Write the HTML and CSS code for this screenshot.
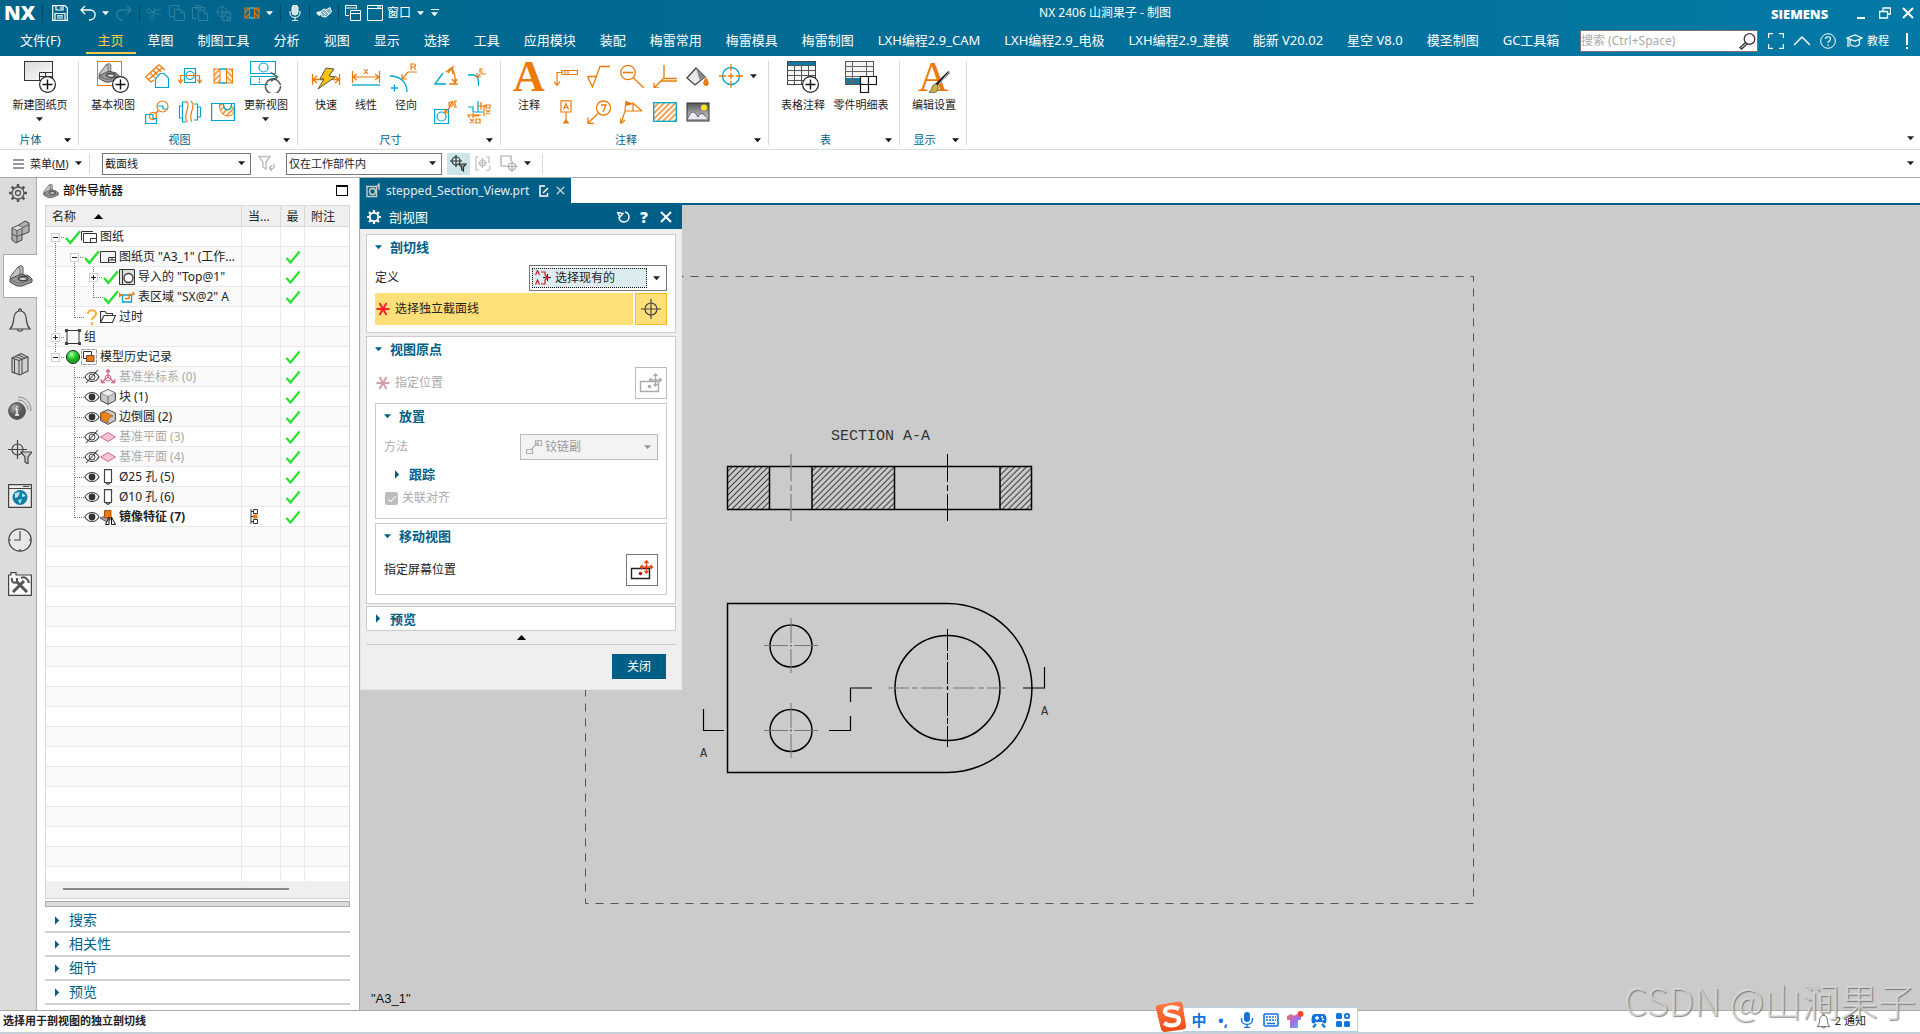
FILE: index.html
```html
<!DOCTYPE html>
<html lang="zh-CN">
<head>
<meta charset="utf-8">
<title>NX 2406 山涧果子 - 制图</title>
<link rel="stylesheet" href="styles.css">
</head>
<body>
<svg class="defs" aria-hidden="true">
  <defs>
    <pattern id="hatch" width="4.25" height="4.25" patternUnits="userSpaceOnUse" patternTransform="rotate(45)"><path d="M2 0V5" stroke="#222" stroke-width=".9"/></pattern>
    <pattern id="ohatch" width="4" height="4" patternUnits="userSpaceOnUse" patternTransform="rotate(-45)"><path d="M0 2H4" stroke="#ec7a08" stroke-width="1.4"/></pattern>
    <pattern id="ohatch2" width="4" height="4" patternUnits="userSpaceOnUse" patternTransform="rotate(45)"><path d="M0 2H4" stroke="#ec7a08" stroke-width="1.4"/></pattern>
    <linearGradient id="paper" x2="1" y2="1"><stop stop-color="#d8d8d8"/><stop offset="1" stop-color="#fff"/></linearGradient>
    <linearGradient id="sky" x2="0" y2="1"><stop stop-color="#555"/><stop offset="1" stop-color="#ddd"/></linearGradient>
    <linearGradient id="shirt" x2="1" y2="1"><stop stop-color="#ff6a55"/><stop offset=".5" stop-color="#a66be8"/><stop offset="1" stop-color="#46c8ff"/></linearGradient>
    <linearGradient id="sg" x2="0" y2="1"><stop stop-color="#ff7a45"/><stop offset="1" stop-color="#ee4a10"/></linearGradient>
    <radialGradient id="ball" cx=".4" cy=".3"><stop stop-color="#d5ffd0"/><stop offset=".5" stop-color="#35dc3a"/><stop offset="1" stop-color="#1aa51f"/></radialGradient>
    <radialGradient id="gball" cx=".35" cy=".3"><stop stop-color="#aaa"/><stop offset="1" stop-color="#555"/></radialGradient>
  </defs>
  <symbol id="caret" viewBox="0 0 8 5"><path d="M0 0H8L4 4.5Z" fill="currentColor"/></symbol>
  <symbol id="tri" viewBox="0 0 6 10"><path d="M0 0L5 5L0 10Z" fill="currentColor"/></symbol>
  <symbol id="plus" viewBox="0 0 17 17"><circle cx="8.500" cy="8.500" r="7.900" fill="#fff" stroke="#222" stroke-width="1.2"/><path d="M8.500 3.500V13.500M3.500 8.500H13.500" stroke="#111" stroke-width="1.400"/></symbol>

  <symbol id="save" viewBox="0 0 16 16"><path d="M.7.7H13L15.300 3V15.300H.7ZM4 .7V5H11V.7M3 15V8.500H13V15M5 10.800H11M5 13H11M9 2V4" fill="none" stroke="#fff" stroke-width="1.200"/></symbol>
  <symbol id="undo" viewBox="0 0 16 16"><path d="M5 1L1 5L5 9M1 5H10C17 5 17 15 9 15" fill="none" stroke="currentColor" stroke-width="1.300"/></symbol>
  <symbol id="redo" viewBox="0 0 16 16"><path d="M11 1L15 5L11 9M15 5H6C-1 5-1 15 7 15" fill="none" stroke="currentColor" stroke-width="1.300"/></symbol>
  <symbol id="cut" viewBox="0 0 16 16"><g fill="none" stroke="currentColor"><circle cx="3" cy="6" r="2.200"/><circle cx="6" cy="13" r="2.200"/><path d="M5 7L15 10M7 11L9 2M5 7L12 5L15 4"/></g></symbol>
  <symbol id="copy" viewBox="0 0 16 16"><path d="M10 4V.5H.5V11.500H5M5.500 4.500H12L15.500 8V15.500H5.500ZM12 4.500V8H15.500" fill="none" stroke="currentColor"/></symbol>
  <symbol id="paste" viewBox="0 0 16 16"><path d="M5 13.500H.5V2.500H12.500V5M4 2V.5H9V4H4V2M6.500 5.500H12L15.500 9V15.500H6.500ZM12 5.500V9H15.500" fill="none" stroke="currentColor"/></symbol>
  <symbol id="mv" viewBox="0 0 16 16"><g fill="none" stroke="currentColor"><circle cx="7" cy="7" r="5"/><path d="M7 0V14M0 7H14M7.500 7.500H15.500V15.500H7.500ZM9 9L14 14M14 11V14H11"/></g></symbol>
  <symbol id="sect" viewBox="0 0 16 16"><rect x="1" y="3" width="4.500" height="10" fill="url(#ohatch)" stroke="#ec7a08"/><rect x="10.500" y="3" width="4.500" height="10" fill="url(#ohatch2)" stroke="#ec7a08"/><path d="M6 3H10M6 13H10" stroke="#19c4ec" stroke-width="1.300"/></symbol>
  <symbol id="mic" viewBox="0 0 16 16"><rect x="5" y="0" width="6" height="10" rx="3" fill="#cfe3ea" stroke="#fff"/><path d="M3 6V8C3 14 13 14 13 8V6M8 12.500V15M5 15.500H11" fill="none" stroke="#fff"/></symbol>
  <symbol id="tap" viewBox="0 0 16 16"><path d="M0 8L3 6L6 9L3 11Z" fill="#fff"/><path d="M4 7L8 4L10 5L14 2.500L15.500 7L10 12L6 11.500Z" fill="#7db2c6" stroke="#fff"/><path d="M9 5L13 9M7 7L10 10" stroke="#fff"/></symbol>
  <symbol id="wins" viewBox="0 0 16 16"><path d="M.5.500H11.500V4M4 10.500H.5V.5M.5 3H11.500M5.500 5.500H15.500V15.500H5.500ZM5.500 8.500H15.500" fill="none" stroke="#fff"/></symbol>
  <symbol id="win" viewBox="0 0 16 16"><path d="M.5.500H15.500V15.500H.5ZM.5 3.500H15.500M10 2H14" fill="none" stroke="#fff"/></symbol>
  <symbol id="search" viewBox="0 0 17 17"><g fill="none" stroke="#333" stroke-width="1.300"><circle cx="10.500" cy="6" r="5.300"/><path d="M6.500 9.500L1 14.500L2.500 16L8 11"/></g></symbol>
  <symbol id="full" viewBox="0 0 16 16"><path d="M5 .6H.6V5M11 .6H15.400V5M5 15.400H.6V11M11 15.400H15.400V11" fill="none" stroke="#fff" stroke-width="1.200"/></symbol>
  <symbol id="up" viewBox="0 0 16 16"><path d="M0 12L8 4L16 12" fill="none" stroke="#fff" stroke-width="1.500"/></symbol>
  <symbol id="help" viewBox="0 0 16 16"><circle cx="8" cy="8" r="7.300" fill="none" stroke="#fff"/><path d="M5.500 6C5.500 3 10.500 3 10.500 6C10.500 8 8 8 8 10M8 11.500V13" fill="none" stroke="#fff" stroke-width="1.200"/></symbol>
  <symbol id="hat" viewBox="0 0 17 14"><path d="M1 4L9 1L16 4L9 7ZM4 5.500V10C6 13 12 13 13.500 10V5.500M2 5V12M4 12H1" fill="none" stroke="#fff" stroke-width="1.200"/></symbol>

  <symbol id="part" viewBox="0 0 24 22"><path d="M1 12L9 2L12 .6L14 2V10L3 16Z" fill="#c4c4c4" stroke="#555"/><path d="M9 2L11 3V12" fill="none" stroke="#666"/><path d="M1 14L12 9L20 11L23 14V17L13 21L8 21L1 17Z" fill="#9a9a9a" stroke="#444"/><path d="M1 14L9 18H13L23 14" fill="none" stroke="#666"/><ellipse cx="14" cy="13.500" rx="5" ry="2.300" fill="#777" stroke="#333"/><ellipse cx="14" cy="14" rx="3" ry="1.100" fill="#ddd"/></symbol>
  <symbol id="newsheet" viewBox="0 0 32 32"><rect x=".5" y=".5" width="28" height="19" fill="url(#paper)" stroke="#333"/><path d="M15.500 19V11.500H28M15.500 15.500H28M21.500 11.500V16" fill="none" stroke="#333"/><use href="#plus" x="15" y="15" width="17" height="17"/></symbol>
  <symbol id="baseview" viewBox="0 0 32 32"><rect x=".5" y=".5" width="24" height="24" fill="#fff" stroke="#ec7a08"/><use href="#part" x="1" y="2" width="22" height="20"/><use href="#plus" x="15" y="15" width="17" height="17"/></symbol>
  <symbol id="update" viewBox="0 0 32 32"><g fill="none" stroke="#00a5cf" stroke-width="1.200"><path d="M.5.500H25.500V12.500H.5ZM.5 15.500H25.500M.5 15.500V23.500H18"/><circle cx="13.500" cy="6.500" r="4.500"/><path d="M9.500 17V22" stroke-dasharray="2 1"/></g><path d="M27 19A7.500 7.500 0 1 0 30.500 25M21 11.500L27.500 16L21 20M22 18C25 18 29 19 30.500 24" fill="none" stroke="#555" stroke-width="1.500"/></symbol>
  <symbol id="fast" viewBox="0 0 32 32"><path d="M2.500 13V24M29.500 13V24M3 18.500H29M7 15L3 18.500L7 22M25 15L29 18.500L25 22" fill="none" stroke="#ec7a08" stroke-width="1.300"/><path d="M16 7L24 8L19 15L25 16L8 28L14 18H10Z" fill="#f8c20a" stroke="#555"/></symbol>
  <symbol id="linear" viewBox="0 0 32 32"><path d="M2.500 10V22M29.500 10V22M3 16H29M7 13L3 16L7 19M25 13L29 16L25 19M14 8L18 13M18 8L14 13" fill="none" stroke="#ec7a08" stroke-width="1.200"/><path d="M2 24H30" stroke="#00a5cf" stroke-width="1.300"/></symbol>
  <symbol id="radial" viewBox="0 0 32 32"><path d="M0 15C10 15 17 21 17 31M1 27H8M4.500 23.500V30.500" fill="none" stroke="#00a5cf" stroke-width="1.300"/><path d="M12 18L18 11H27M12 13V18H17M21 9V3H24C26 3 26 6 24 6H21M24 6L26 9" fill="none" stroke="#ec7a08" stroke-width="1.200"/></symbol>
  <symbol id="table" viewBox="0 0 32 32"><rect x=".5" y=".5" width="28" height="23" fill="#f7f7f7" stroke="#444"/><rect x="1" y="1" width="27" height="3" fill="#0a7ba6"/><path d="M0 4.500H28M0 9.500H28M0 14.500H28M0 19.500H28M7.500 4V23M14.500 4V23M21.500 4V23" stroke="#555"/><use href="#plus" x="15" y="15" width="17" height="17"/></symbol>
  <symbol id="plist" viewBox="0 0 32 32"><rect x=".5" y=".5" width="28" height="23" fill="#f3f3f3" stroke="#555"/><rect x="1" y="17" width="16" height="6" fill="#0a7ba6"/><path d="M0 5.500H28M0 10.500H28M0 15.500H28M7.500 1V23M21.500 1V15M1 20H16" stroke="#666"/><path d="M15.500 15.500H31.500V23.500H23.500V31.500H15.500ZM15.500 23.500H23.500V15.500" fill="#fff" stroke="#111" stroke-width="1.200"/></symbol>
  <symbol id="edit" viewBox="0 0 32 32"><path d="M31 11L17 25" stroke="#222" stroke-width="2.500"/><path d="M32 10L21 23" stroke="#ccc" stroke-width="1"/><path d="M18 23C13 23 15 29 11 31C16 33 21 31 20 25Z" fill="#d0b040" stroke="#665"/></symbol>

  <symbol id="s1" viewBox="0 0 24 24"><g fill="none" stroke-width="1.200"><path d="M.6 13L14 .7L20 6M.6 13L6 18L9 16M5 9L10 14M8 6L12.500 11M11 3L16 8M4 15L17 4" stroke="#ec7a08"/><path d="M10.500 23.500V15L15 9.500H19L23.500 14V23.500Z" stroke="#00a5cf" fill="#fff"/></g></symbol>
  <symbol id="s2" viewBox="0 0 24 24"><g fill="none" stroke-width="1.200"><path d="M6.500 4.500H17.500V18.500H6.500Z" stroke="#00a5cf"/><circle cx="12" cy="11.500" r="4" stroke="#00a5cf"/><path d="M2.500 18V11.500H21.500V18M0 15.500L2.500 19L5 15.500M19 15.500L21.500 19L24 15.500" stroke="#ec7a08"/></g></symbol>
  <symbol id="s3" viewBox="0 0 24 24"><rect x="3" y="5" width="6" height="14" fill="url(#ohatch)" stroke="#ec7a08"/><rect x="15.500" y="5" width="6" height="14" fill="url(#ohatch2)" stroke="#ec7a08"/><path d="M9 5H15.500M9 19H15.500" stroke="#00a5cf" stroke-width="1.400"/></symbol>
  <symbol id="s4" viewBox="0 0 24 24"><g fill="none" stroke-width="1.200"><circle cx="17.500" cy="6.500" r="5.500" stroke="#ec7a08"/><circle cx="8" cy="16" r="3.500" stroke="#ec7a08"/><path d="M13.500 10.500L10.500 13.500" stroke="#ec7a08"/><path d="M.6 14.500H8V18.500H11.500V23.500H.6ZM13 6H18V9H22" stroke="#00a5cf"/></g></symbol>
  <symbol id="s5" viewBox="0 0 24 24"><g fill="none" stroke-width="1.200"><path d="M8 2H4.500V22H8M4.500 6H1.500V18H4.500M16 4H19.500V20H16M19.500 7H22.500V17H19.500" stroke="#00a5cf"/><path d="M8 1C14 7 4 14 9 22M13 1C19 7 9 14 14 22" stroke="#ec7a08"/></g></symbol>
  <symbol id="s6" viewBox="0 0 24 24"><path d="M8.500 4C8 11 12 16 17 16C20 16 22 14 23 12V9L20.500 6C20 11 12.500 11 12.500 4Z" fill="url(#ohatch)" stroke="#ec7a08"/><path d="M.6 3.500H23.400V20.500H.6ZM12.500 3.500C12.500 12 20.500 12 20.500 3.500" fill="none" stroke="#00a5cf" stroke-width="1.200"/></symbol>
  <symbol id="d1" viewBox="0 0 24 24"><path d="M9 9L1 20H12" fill="none" stroke="#00a5cf" stroke-width="1.300"/><path d="M12 8L20 2M15 20H24M18 4C20 8 22 13 21 19M14 9L18 4L19 10M18 15L21 19L23 15" fill="none" stroke="#ec7a08" stroke-width="1.300"/></symbol>
  <symbol id="d2" viewBox="0 0 24 24"><path d="M1 11H7C11 12 11.500 14 11.500 22" fill="none" stroke="#00a5cf" stroke-width="1.300"/><path d="M10 14L13 10H19M10 9V13H14M16 5H13V8H16" fill="none" stroke="#ec7a08" stroke-width="1.200"/></symbol>
  <symbol id="d3" viewBox="0 0 24 24"><g fill="none" stroke-width="1.200"><path d="M.6 9.500H14.500V23.500H.6Z" stroke="#00a5cf"/><circle cx="7.500" cy="16.500" r="4.500" stroke="#00a5cf"/><path d="M11 13L16 7M11 9V13H15M21 1V7M23 1H20M23 7H20M15 7L19 1" stroke="#ec7a08"/><circle cx="17" cy="4" r="2.200" stroke="#ec7a08"/></g></symbol>
  <symbol id="d4" viewBox="0 0 24 24"><g fill="none" stroke-width="1.200"><path d="M1 7H6V12H16M11 1V12" stroke="#00a5cf"/><path d="M10 6H20M7 16H12M2 15V18M6 13V18M14 2V10M17 5V16M19 5H23V8H19ZM19 10L23 14M23 10L19 14M3 19L7 23M7 19L3 23M9 19H13V23H9ZM0 15H14" stroke="#ec7a08"/></g></symbol>
  <symbol id="a1" viewBox="0 0 24 24"><path d="M8 6.500H23.500V10.500H8ZM11 6.500V10.500M14 6.500V10.500M8 8.500H3V21M0 17.500L3 21.500L6 17.500" fill="none" stroke="#ec7a08" stroke-width="1.200"/></symbol>
  <symbol id="a2" viewBox="0 0 24 24"><path d="M.5 12.500H9M.5 12.500L5.500 23L13 2.500H23" fill="none" stroke="#ec7a08" stroke-width="1.300"/></symbol>
  <symbol id="a3" viewBox="0 0 24 24"><g fill="none" stroke="#ec7a08" stroke-width="1.300"><circle cx="8" cy="8.500" r="7.200"/><path d="M3 8.500H13M13 13.500L24 24"/></g></symbol>
  <symbol id="a4" viewBox="0 0 24 24"><path d="M11 1V14.500H24M24 17H8L1 24M1 19V24H6M11 14L8 17" fill="none" stroke="#ec7a08" stroke-width="1.300"/></symbol>
  <symbol id="a5" viewBox="0 0 24 24"><path d="M1 14L10 4L19 13L9 21Z" fill="#e8e8e8" stroke="#444" stroke-width="1.300"/><path d="M10 4L19 13L14 17Z" fill="#888"/><path d="M20 13C15 20 18 22 20 22C22 22 25 20 20 13Z" fill="#ec7a08"/></symbol>
  <symbol id="a6" viewBox="0 0 24 24"><circle cx="12" cy="12" r="8.500" fill="none" stroke="#00a5cf" stroke-width="1.300"/><path d="M12 0V7M12 17V24M0 12H7M17 12H24M12 9V15M9 12H15" stroke="#ec7a08" stroke-width="1.300"/></symbol>
  <symbol id="b1" viewBox="0 0 24 24"><path d="M7 .8H17V12H7ZM12 12V21M9.500 9.500L12 3.500L14.500 9.500M10.500 7.500H13.500" fill="none" stroke="#ec7a08" stroke-width="1.200"/><path d="M8.500 23.500L12 19L15.500 23.500Z" fill="#ec7a08"/></symbol>
  <symbol id="b2" viewBox="0 0 24 24"><g fill="none" stroke="#ec7a08" stroke-width="1.300"><circle cx="16.500" cy="8" r="7"/><path d="M14 5H19L16 12M11.500 13L1 23M1 17.500V23.500H7"/></g></symbol>
  <symbol id="b3" viewBox="0 0 24 24"><path d="M6 1L14 4L5 6Z" fill="#ec7a08"/><path d="M6 1L5 11H22M13 11V3L22 11M5 11L1 23M0 18L1 23.500L5 20" fill="none" stroke="#ec7a08" stroke-width="1.200"/></symbol>
  <symbol id="b4" viewBox="0 0 24 24"><rect x=".7" y="2.700" width="22.600" height="18.600" fill="url(#ohatch)" stroke="#00a5cf" stroke-width="1.300"/></symbol>
  <symbol id="b5" viewBox="0 0 24 24"><rect x="1" y="3" width="22" height="18" fill="url(#sky)" stroke="#333"/><path d="M1 20C5 10 8 10 12 17C14 12 17 12 23 20Z" fill="#e8e8ee" stroke="#556"/><circle cx="18" cy="7.500" r="3" fill="#ffe21a"/></symbol>

  <symbol id="funback" viewBox="0 0 18 18"><path d="M1 1.500H12L8 7V14L5 12V7ZM15 9C18 12 15 15 11 13M11 13L14 10.500M11 13L14 16" fill="none" stroke="#bbb" stroke-width="1.400"/></symbol>
  <symbol id="snap" viewBox="0 0 18 18"><g fill="none" stroke="#333" stroke-width="1.200"><circle cx="6" cy="6" r="4"/><path d="M6 0V12M0 6H12"/><path d="M9 9H16L13.500 12V16L11.500 14.500V12Z" fill="#999"/></g></symbol>
  <symbol id="snap2" viewBox="0 0 18 18"><g fill="none" stroke="#bbb" stroke-width="1.200"><path d="M4 2H1V15H4M11 2H14V8"/><circle cx="7.500" cy="8" r="3"/><path d="M7.500 3V13M3 8H12M14 11C17 13 14 16 11 15"/></g></symbol>
  <symbol id="snap3" viewBox="0 0 18 18"><g fill="none" stroke="#aaa" stroke-width="1.200"><path d="M7 11H1V1H11V6"/><circle cx="12" cy="11.500" r="3.500"/><path d="M12 6V17M6.500 11.500H17.500"/></g></symbol>

  <symbol id="gear" viewBox="0 0 18 18"><g fill="none" stroke="#555" stroke-width="1.300"><circle cx="9" cy="9" r="6"/><circle cx="9" cy="9" r="2.500"/><path d="M9 0V3M9 15V18M0 9H3M15 9H18M2.600 2.600L4.700 4.700M13.300 13.300L15.400 15.400M15.400 2.600L13.300 4.700M4.700 13.300L2.600 15.400" stroke-width="2.500"/></g></symbol>
  <symbol id="blocks" viewBox="0 0 24 24"><path d="M4 8L10 5.500L14 3L17 1L21 3V12L14 15V20L8 23L4 20Z" fill="#b0b0b0" stroke="#444"/><path d="M4 8L9 10.500L21 4.500M9 10.500V23M4 14L9 16.500L14 14M14 8V15M10 5.500L15 7.500" fill="none" stroke="#555"/><path d="M5 8L10.500 6L14.500 7.500L9 10Z" fill="#e0e0e0"/></symbol>
  <symbol id="bell" viewBox="0 0 24 24"><path d="M2 21H22C18 17 19 14 18 9C17 4 14 3 12 3C10 3 7 4 6 9C5 14 6 17 2 21ZM9 21C10 24 14 24 15 21M10.500 3C10.500 0 13.500 0 13.500 3" fill="none" stroke="#444" stroke-width="1.200"/></symbol>
  <symbol id="books" viewBox="0 0 24 24"><path d="M4 6L13 1.500L20 5V19L12 23L4 20Z" fill="#d0d0d0" stroke="#444" stroke-width="1.100"/><path d="M4 6L11 8.500V23M11 8.500L20 5M6.500 7V21M7 4.500L14 7V21.500M10 3L17 6" fill="none" stroke="#444"/></symbol>
  <symbol id="info" viewBox="0 0 24 24"><circle cx="9" cy="15" r="8.300" fill="url(#gball)" stroke="#444"/><path d="M9 13V19M7.500 13H9M7 19H11M9 10V11.500" stroke="#fff" stroke-width="1.300"/><path d="M10 1C18 1 23 7 23 15M10 4C16 4 20 9 20 14" fill="none" stroke="#888"/></symbol>
  <symbol id="tfil" viewBox="0 0 24 24"><g fill="none" stroke="#444" stroke-width="1.200"><circle cx="9.500" cy="9.500" r="5.500"/><path d="M9.500 0V19M0 9.500H19"/><path d="M13 12H24L20 17V24L17 22V17Z" fill="#ccc"/></g></symbol>
  <symbol id="web" viewBox="0 0 24 24"><path d="M.6.600H23.400V23.400H.6ZM.6 4.500H23.400M15 2.500H21" fill="#ececec" stroke="#444" stroke-width="1.200"/><circle cx="12" cy="13.500" r="7.500" fill="#0f7fa8"/><path d="M7 9L12 8L10 13L7 14ZM14 9L18 12L14 13ZM10 16L14 15L12 20Z" fill="#bfe3ee"/></symbol>
  <symbol id="clock" viewBox="0 0 24 24"><circle cx="12" cy="12" r="11.200" fill="#e8e8e8" stroke="#444" stroke-width="1.200"/><path d="M12 3V12H6M12 21V23M1 12H3M21 12H23" fill="none" stroke="#444" stroke-width="1.200"/></symbol>
  <symbol id="tools" viewBox="0 0 24 24"><path d="M.6 23.400V3H3V.6H8V3H23.400V23.400Z" fill="#fafafa" stroke="#444" stroke-width="1.200"/><path d="M5 20L16 9M8 9L19 20" stroke="#555" stroke-width="3"/><path d="M13 6C17 4 20 7 21 11M4 6C3 10 6 12 9 10L9 6" fill="none" stroke="#555" stroke-width="2"/></symbol>

  <symbol id="ok" viewBox="0 0 15 14"><path d="M1 8L5 12.500L14 1.500" fill="none" stroke="#27e02f" stroke-width="2.200"/></symbol>
  <symbol id="g-v" viewBox="0 0 19 20"><path d="M9.500 0V20" stroke="#777" stroke-dasharray="1 1"/></symbol>
  <symbol id="g-t" viewBox="0 0 19 20"><path d="M9.500 0V20M10 10.500H19" stroke="#777" stroke-dasharray="1 1"/></symbol>
  <symbol id="g-l" viewBox="0 0 19 20"><path d="M9.500 0V11M10 10.500H19" stroke="#777" stroke-dasharray="1 1"/></symbol>
  <symbol id="g-m" viewBox="0 0 19 20"><path d="M9.500 14V20M13 10.500H19" stroke="#777" stroke-dasharray="1 1"/><rect x="5.500" y="6.500" width="8" height="8" fill="#fff" stroke="#ccc"/><path d="M7 10.500H12" stroke="#222"/></symbol>
  <symbol id="g-e" viewBox="0 0 19 20"><path d="M9.500 0V6M13 10.500H19" stroke="#777" stroke-dasharray="1 1"/><rect x="5.500" y="6.500" width="8" height="8" fill="#fff" stroke="#ccc"/><path d="M7 10.500H12" stroke="#222"/></symbol>
  <symbol id="g-p" viewBox="0 0 19 20"><path d="M9.500 0V20M13 10.500H19" stroke="#777" stroke-dasharray="1 1"/><rect x="5.500" y="6.500" width="8" height="8" fill="#fff" stroke="#ccc"/><path d="M7 10.500H12M9.500 8V13" stroke="#222"/></symbol>
  <symbol id="sheets" viewBox="0 0 16 16"><path d="M.5 11.500V2.500H12M2.500 4.500H15.500V13.500H2.500ZM9.500 13V9.500H15" fill="none" stroke="#333"/></symbol>
  <symbol id="sheet" viewBox="0 0 16 16"><path d="M.5 2.500H15.500V13.500H.5ZM8.500 13V8.500H15M8.500 11H15M12 9V11" fill="#f4f4f4" stroke="#333"/></symbol>
  <symbol id="impv" viewBox="0 0 16 16"><path d="M.5.500H15.500V15.500H.5ZM3.500 1V15" fill="#ddd" stroke="#333"/><circle cx="9.500" cy="9" r="4.500" fill="#fff" stroke="#333" stroke-width="1.300"/></symbol>
  <symbol id="sxl" viewBox="0 0 16 16"><path d="M3.500 6H12.500V13H3.500Z" fill="none" stroke="#00a5cf" stroke-width="1.300"/><path d="M0 6H4M6 9.500H10V5.500H15M13.500 3L15.500 5.500M0 8L2 6L0 4" fill="none" stroke="#ec7a08" stroke-width="1.300"/></symbol>
  <symbol id="ques" viewBox="0 0 16 16"><path d="M4 5C4 0 12 0 12 5C12 8 8 8 8 11M8 13V16" fill="none" stroke="#ffae42" stroke-width="2.200"/></symbol>
  <symbol id="folder" viewBox="0 0 16 16"><path d="M.6 13.500V2.500H5L6.500 4.500H12.500V6.500M.6 13.500L4 6.500H15.400L12.500 13.500Z" fill="none" stroke="#333" stroke-width="1.100"/></symbol>
  <symbol id="grp" viewBox="0 0 16 16"><path d="M2 1.500H14V14.500H2Z" fill="none" stroke="#333"/><path d="M0 0H3V3H0ZM13 0H16V3H13ZM0 13H3V16H0ZM13 13H16V16H13Z" fill="#444"/></symbol>
  <symbol id="gball2" viewBox="0 0 16 16"><circle cx="8" cy="8" r="6.600" fill="url(#ball)" stroke="#333"/></symbol>
  <symbol id="hist" viewBox="0 0 16 16"><path d="M.5.500H15.500V15.500H.5Z" fill="none" stroke="#999" stroke-dasharray="4 1"/><path d="M2.500 2.500H10.500V9.500H2.500Z" fill="#fff" stroke="#333"/><path d="M5.500 6.500H13V12.500H5.500Z" fill="#ec7a08" stroke="#744"/></symbol>
  <symbol id="eye" viewBox="0 0 16 16"><path d="M1 8C4 2 12 2 15 8C12 14 4 14 1 8Z" fill="#fff" stroke="#444" stroke-width="1.100"/><circle cx="8" cy="8" r="3.400" fill="#333"/></symbol>
  <symbol id="eyeoff" viewBox="0 0 16 16"><path d="M1 8C4 2 12 2 15 8C12 14 4 14 1 8ZM2 14L14 1" fill="none" stroke="#444" stroke-width="1.100"/><circle cx="8" cy="8" r="3" fill="none" stroke="#444"/></symbol>
  <symbol id="csys" viewBox="0 0 16 16"><path d="M8 8V1M6 3L8 .6L10 3M8 8L2 13M1 10L1.500 13.500L5 13.500M8 8L14 13M15 10L14.500 13.500L11 13.500" fill="none" stroke="#d2698d" stroke-width="1.300"/><circle cx="8" cy="9" r="3" fill="none" stroke="#d2698d"/></symbol>
  <symbol id="cube" viewBox="0 0 16 16"><path d="M8 .6L15.400 4V11.500L8 15.400L.6 11.500V4Z" fill="#c9c9c9" stroke="#444"/><path d="M.6 4L8 7.500L15.400 4L8 .6Z" fill="#eee" stroke="#666" stroke-width=".6"/><path d="M8 7.500V15" stroke="#666"/></symbol>
  <symbol id="blend" viewBox="0 0 16 16"><path d="M8 .6L15.400 4V11.500L8 15.400L.6 11.500V4Z" fill="#c9c9c9" stroke="#444"/><path d="M.6 4L5 3L13 7C9 8 8 11 8 14L1 10Z" fill="#f08217" stroke="#8a4b10" stroke-width=".6"/></symbol>
  <symbol id="plane" viewBox="0 0 16 16"><path d="M.6 8L8 3.500L15.400 8L8 12.500Z" fill="#f7c4d2" stroke="#d2698d"/></symbol>
  <symbol id="hole" viewBox="0 0 16 16"><path d="M4.500.600H11.500V13.500H4.500ZM5.500 13.500L8 15.500L10.500 13.500" fill="#fff" stroke="#444" stroke-width="1.200"/></symbol>
  <symbol id="mirror" viewBox="0 0 16 16"><path d="M0 9L8 6L12 9L7 13Z" fill="#aaa" stroke="#555"/><path d="M4.500 1.500H11V9H4.500Z" fill="#ec7a08" stroke="#a3540a"/><path d="M9 8V15.500H5.500ZM11.500 8V15.500H15.500Z" fill="#fff" stroke="#111"/></symbol>
  <symbol id="dep" viewBox="0 0 8 15"><path d="M1 0V15M1 2.500H3M1 7.500H3M1 12.500H3M3.500.500H7.500V4.500H3.500ZM3.500 10.500H7.500V14.500H3.500Z" fill="none" stroke="#333"/><rect x="3" y="5.500" width="4.500" height="4" fill="#ec7a08"/></symbol>

  <symbol id="doc" viewBox="0 0 14 15"><path d="M1 3.500H10.500V13.500H1ZM0 3.500H11L13 1V7" fill="none" stroke="#c9c9c9" stroke-width="1.400"/><circle cx="6.500" cy="8.500" r="3" fill="none" stroke="#d9d2b8" stroke-width="1.400"/></symbol>
  <symbol id="pen" viewBox="0 0 10 12"><path d="M6 1H1V11H8.500V8M4 8L9 3" fill="none" stroke="#fff" stroke-width="1.500"/></symbol>
  <symbol id="x" viewBox="0 0 12 12"><path d="M1 1L11 11M11 1L1 11" stroke="currentColor" stroke-width="2"/></symbol>
  <symbol id="wgear" viewBox="0 0 14 14"><g fill="none" stroke="#fff"><circle cx="7" cy="7" r="4.300" stroke-width="2"/><path d="M7 0V2M7 12V14M0 7H2M12 7H14M2 2L3.500 3.500M12 12L10.500 10.500M12 2L10.500 3.500M2 12L3.500 10.500" stroke-width="2.200"/></g></symbol>
  <symbol id="reset" viewBox="0 0 14 14"><path d="M8 2A5 5 0 1 1 2 7M.5 2.500L3 7L6 3.500Z" fill="none" stroke="#fff" stroke-width="1.500"/></symbol>
  <symbol id="star" viewBox="0 0 14 14"><path d="M3.500 1L10.500 13M10.500 1L3.500 13M.5 7H13.500" stroke="currentColor" stroke-width="2"/></symbol>
  <symbol id="aim" viewBox="0 0 20 20"><circle cx="10" cy="10" r="6" fill="none" stroke="#444" stroke-width="1.200"/><path d="M10 0V20M0 10H20" stroke="#444" stroke-width="1.200"/></symbol>
  <symbol id="move" viewBox="0 0 24 20"><path d="M1.500 8.500H19.500V18.500H1.500Z" fill="none" stroke="var(--box)" stroke-width="1.400"/><circle cx="10.500" cy="13.500" r="1.800" fill="var(--dot)"/><path d="M16.500 1V13M10.500 7H22.500M14.500 3L16.500 1L18.500 3M14.500 11L16.500 13L18.500 11M12.500 5L10.500 7L12.500 9M20.500 5L22.500 7L20.500 9" fill="none" stroke="var(--arrow)" stroke-width="1.300"/></symbol>
  <symbol id="exist" viewBox="0 0 16 16"><g fill="none" stroke="#c8202a" stroke-width="1.200"><path d="M.5 5L2.500.500L4.500 5M.5 14.500L2.500 10L4.500 14.500M6 2H10V5L13 7.500L10 10V14H6"/></g><path d="M8 7.500H16M12.500 4V11" stroke="#222"/><circle cx="12" cy="7.500" r="1.800" fill="#c8202a"/></symbol>
  <symbol id="hinge" viewBox="0 0 17 16"><path d="M.5 10.500H6.500V14.500H.5ZM9.500 1.500H15.500V6.500H9.500ZM5 11L11 4M12 1V7" fill="none" stroke="#b0b0b0" stroke-width="1.200"/></symbol>

  <symbol id="sogou" viewBox="0 0 32 31"><path d="M1 8Q0 5 3 4L24 .5Q27 0 27.500 3L31 25Q31 28 28 28.500L10 31Q7 31 6 28Z" fill="url(#sg)"/><path d="M24 8C18 5 9 6 10 11C11 16 24 13 24 19C24 26 13 25 9 22" fill="none" stroke="#fff" stroke-width="4.200"/></symbol>
  <symbol id="pmic" viewBox="0 0 16 16"><rect x="5" y="0" width="6" height="10" rx="3" fill="#1273de"/><path d="M2.500 6V7.500C2.500 14 13.500 14 13.500 7.500V6M8 12V15.500M5 15.500H11" fill="none" stroke="#1273de" stroke-width="1.400"/></symbol>
  <symbol id="kbd" viewBox="0 0 16 16"><rect x="1" y="2" width="14" height="12" rx="1" fill="#fff" stroke="#1273de" stroke-width="1.600"/><path d="M3 5H13M3 8H13" stroke="#1273de" stroke-width="1.600" stroke-dasharray="2 1"/><path d="M4 11.500H12" stroke="#1273de" stroke-width="1.500"/></symbol>
  <symbol id="tee" viewBox="0 0 18 18"><path d="M1 5L5 3Q8 6 11 3L15 5V9H12V17H4V9H1Z" fill="url(#shirt)"/><circle cx="14.500" cy="3" r="3" fill="#f4472a"/></symbol>
  <symbol id="game" viewBox="0 0 16 16"><path d="M4 2H12Q15.500 2 15.500 8Q15.500 12 13 11.500L11 10H5L3 11.500Q.5 12 .5 8Q.5 2 4 2Z" fill="#1273de"/><path d="M4 6H8M6 4V8M10 5H12M11 7.500H13" stroke="#fff" stroke-width="1.400"/><path d="M2 15.500L5 12M14 15.500L11 12" stroke="#1273de" stroke-width="2.200"/></symbol>
  <symbol id="apps" viewBox="0 0 14 14"><g fill="#1273de"><rect width="6" height="6" rx="1.500"/><rect y="8" width="6" height="6" rx="1.500"/><rect x="8" y="8" width="6" height="6" rx="1.500"/></g><rect x="9" y="1" width="4" height="4" rx="1.500" fill="none" stroke="#1273de" stroke-width="2"/></symbol>
</svg>

<header class="top">
  <div class="titlebar">
    <b class="nx">NX</b>
    <i class="sep"></i>
    <button class="ib" aria-label="保存"><svg class="i16"><use href="#save"/></svg></button>
    <button class="ib gap-l" aria-label="撤销"><svg class="i16"><use href="#undo"/></svg></button>
    <button class="ib cw" aria-label="撤销列表"><svg class="caret"><use href="#caret"/></svg></button>
    <button class="ib dim" aria-label="重做"><svg class="i16"><use href="#redo"/></svg></button>
    <i class="sep"></i>
    <button class="ib dim" aria-label="剪切"><svg class="i16"><use href="#cut"/></svg></button>
    <button class="ib dim" aria-label="复制"><svg class="i16"><use href="#copy"/></svg></button>
    <button class="ib dim" aria-label="粘贴"><svg class="i16"><use href="#paste"/></svg></button>
    <button class="ib dim" aria-label="移动"><svg class="i16"><use href="#mv"/></svg></button>
    <button class="ib gap-l" aria-label="剖视图"><svg class="i16"><use href="#sect"/></svg></button>
    <button class="ib cw" aria-label="更多"><svg class="caret"><use href="#caret"/></svg></button>
    <i class="sep"></i>
    <button class="ib" aria-label="语音"><svg class="i16"><use href="#mic"/></svg></button>
    <i class="sep"></i>
    <button class="ib" aria-label="触控"><svg class="i16"><use href="#tap"/></svg></button>
    <i class="sep"></i>
    <button class="ib" aria-label="切换窗口"><svg class="i16"><use href="#wins"/></svg></button>
    <button class="ib winbtn"><svg class="i16"><use href="#win"/></svg>窗口<svg class="caret"><use href="#caret"/></svg></button>
    <button class="ib cw" aria-label="自定义"><svg class="caret over"><use href="#caret"/></svg></button>
    <h1>NX 2406 山涧果子 - 制图</h1>
    <b class="siemens">SIEMENS</b>
    <button class="wb" aria-label="最小化"><svg width="12" height="12"><path d="M1 11H9" stroke="#fff" stroke-width="2"/></svg></button>
    <button class="wb" aria-label="还原"><svg width="12" height="12"><path d="M4 4V1H11.500V7H9M.6 4.500H8.500V11H.6Z" fill="none" stroke="#fff" stroke-width="1.300"/></svg></button>
    <button class="wb" aria-label="关闭窗口"><svg width="12" height="12"><use href="#x"/></svg></button>
  </div>
  <nav class="menubar">
    <button class="m file">文件(F)</button><button class="m on">主页</button><button class="m">草图</button><button class="m">制图工具</button><button class="m">分析</button><button class="m">视图</button><button class="m">显示</button><button class="m">选择</button><button class="m">工具</button><button class="m">应用模块</button><button class="m">装配</button><button class="m">梅雷常用</button><button class="m">梅雷模具</button><button class="m">梅雷制图</button><button class="m">LXH编程2.9_CAM</button><button class="m">LXH编程2.9_电极</button><button class="m">LXH编程2.9_建模</button><button class="m">能新 V20.02</button><button class="m">星空 V8.0</button><button class="m">模圣制图</button><button class="m">GC工具箱</button>
    <div class="tools">
      <label class="search"><input type="text" placeholder="搜索 (Ctrl+Space)" aria-label="搜索"><svg width="17" height="17"><use href="#search"/></svg></label>
      <button class="ib" aria-label="全屏"><svg class="i16"><use href="#full"/></svg></button>
      <button class="ib" aria-label="收起"><svg class="i16"><use href="#up"/></svg></button>
      <button class="ib" aria-label="帮助"><svg class="i16"><use href="#help"/></svg></button>
      <button class="ib tut"><svg width="17" height="14"><use href="#hat"/></svg>教程</button>
      <button class="ib cw" aria-label="提示"><svg width="4" height="16"><path d="M2 0V12M2 14V16" stroke="#fff" stroke-width="2"/></svg></button>
    </div>
  </nav>
</header>

<section class="ribbon">
  <div class="rg g1">
    <div class="rb"><button class="big w56"><svg class="i32"><use href="#newsheet"/></svg>新建图纸页<svg class="caret"><use href="#caret"/></svg></button></div>
    <div class="rf"><span>片体</span><svg class="caret"><use href="#caret"/></svg></div>
  </div>
  <div class="rg g2">
    <div class="rb">
      <button class="big"><svg class="i32"><use href="#baseview"/></svg>基本视图</button>
      <div class="sg c3">
        <button aria-label="投影视图"><svg class="i24"><use href="#s1"/></svg></button><button aria-label="剖切线"><svg class="i24"><use href="#s2"/></svg></button><button aria-label="剖视图"><svg class="i24"><use href="#s3"/></svg></button>
        <button aria-label="局部放大图"><svg class="i24"><use href="#s4"/></svg></button><button aria-label="断开视图"><svg class="i24"><use href="#s5"/></svg></button><button aria-label="局部剖"><svg class="i24"><use href="#s6"/></svg></button>
      </div>
      <button class="big"><svg class="i32"><use href="#update"/></svg>更新视图<svg class="caret"><use href="#caret"/></svg></button>
    </div>
    <div class="rf"><span>视图</span><svg class="caret"><use href="#caret"/></svg></div>
  </div>
  <div class="rg g3">
    <div class="rb">
      <button class="big w40"><svg class="i32"><use href="#fast"/></svg>快速</button>
      <button class="big w40"><svg class="i32"><use href="#linear"/></svg>线性</button>
      <button class="big w40"><svg class="i32"><use href="#radial"/></svg>径向</button>
      <div class="sg c2">
        <button aria-label="角度"><svg class="i24"><use href="#d1"/></svg></button><button aria-label="倒斜角"><svg class="i24"><use href="#d2"/></svg></button>
        <button aria-label="孔标注"><svg class="i24"><use href="#d3"/></svg></button><button aria-label="坐标"><svg class="i24"><use href="#d4"/></svg></button>
      </div>
    </div>
    <div class="rf"><span>尺寸</span><svg class="caret"><use href="#caret"/></svg></div>
  </div>
  <div class="rg g4">
    <div class="rb">
      <button class="big w40"><svg class="i32"><text x="0" y="30" class="bigA">A</text></svg>注释</button>
      <div class="sg c6">
        <button aria-label="特征控制框"><svg class="i24"><use href="#a1"/></svg></button><button aria-label="表面粗糙度"><svg class="i24"><use href="#a2"/></svg></button><button aria-label="焊接符号"><svg class="i24"><use href="#a3"/></svg></button><button aria-label="目标点"><svg class="i24"><use href="#a4"/></svg></button><button aria-label="区域填充"><svg class="i24"><use href="#a5"/></svg></button><button aria-label="中心标记"><svg class="i24"><use href="#a6"/></svg></button>
        <button aria-label="基准特征"><svg class="i24"><use href="#b1"/></svg></button><button aria-label="符号标注"><svg class="i24"><use href="#b2"/></svg></button><button aria-label="焊接"><svg class="i24"><use href="#b3"/></svg></button><button aria-label="剖面线"><svg class="i24"><use href="#b4"/></svg></button><button aria-label="图像"><svg class="i24"><use href="#b5"/></svg></button>
      </div>
      <button class="cm" aria-label="中心标记列表"><svg class="caret"><use href="#caret"/></svg></button>
    </div>
    <div class="rf"><span>注释</span><svg class="caret"><use href="#caret"/></svg></div>
  </div>
  <div class="rg g5">
    <div class="rb">
      <button class="big"><svg class="i32"><use href="#table"/></svg>表格注释</button>
      <button class="big w56"><svg class="i32"><use href="#plist"/></svg>零件明细表</button>
    </div>
    <div class="rf"><span>表</span><svg class="caret"><use href="#caret"/></svg></div>
  </div>
  <div class="rg g6">
    <div class="rb"><button class="big"><svg class="i32"><text x="0" y="30" class="bigA thin">A</text><use href="#edit"/></svg>编辑设置</button></div>
    <div class="rf"><span>显示</span><svg class="caret"><use href="#caret"/></svg></div>
  </div>
  <svg class="caret end"><use href="#caret"/></svg>
</section>

<section class="selbar">
  <button class="menu"><svg width="11" height="10"><path d="M0 1H11M0 5H11M0 9H11" stroke="#333"/></svg>菜单(<u>M</u>)<svg class="caret"><use href="#caret"/></svg></button>
  <i class="vs"></i>
  <span class="sel s148"><select aria-label="类型过滤器"><option>截面线</option></select><svg class="caret"><use href="#caret"/></svg></span>
  <button class="tb" aria-label="重置过滤器"><svg class="i18"><use href="#funback"/></svg></button>
  <span class="sel s156"><select aria-label="选择范围"><option>仅在工作部件内</option></select><svg class="caret"><use href="#caret"/></svg></span>
  <button class="tb hl" aria-label="捕捉"><svg class="i18"><use href="#snap"/></svg></button>
  <button class="tb" aria-label="恢复"><svg class="i18"><use href="#snap2"/></svg></button>
  <button class="tb" aria-label="矩形"><svg class="i18"><use href="#snap3"/></svg></button>
  <svg class="caret"><use href="#caret"/></svg>
  <i class="vs"></i>
  <svg class="caret end"><use href="#caret"/></svg>
</section>

<main class="work">
  <nav class="rail">
    <button class="first" aria-label="设置"><svg class="i18"><use href="#gear"/></svg></button>
    <button aria-label="装配导航器"><svg class="i24"><use href="#blocks"/></svg></button>
    <button class="on" aria-label="部件导航器"><svg class="i24"><use href="#part"/></svg></button>
    <button aria-label="通知"><svg class="i24"><use href="#bell"/></svg></button>
    <button aria-label="重用库"><svg class="i24"><use href="#books"/></svg></button>
    <button aria-label="信息"><svg class="i24"><use href="#info"/></svg></button>
    <button aria-label="选择过滤"><svg class="i24"><use href="#tfil"/></svg></button>
    <button aria-label="浏览器"><svg class="i24"><use href="#web"/></svg></button>
    <button aria-label="历史"><svg class="i24"><use href="#clock"/></svg></button>
    <button aria-label="加工向导"><svg class="i24"><use href="#tools"/></svg></button>
  </nav>

  <aside class="panel">
    <header><svg class="i16"><use href="#part"/></svg><h2>部件导航器</h2><button class="max" aria-label="最大化"></button></header>
    <div class="tree">
      <div class="rows">
      <table>
        <colgroup><col class="k1"><col class="k2"><col class="k3"><col></colgroup>
        <thead><tr><th>名称<svg class="sort" width="9" height="5"><path d="M0 5L4.500 0L9 5Z"/></svg></th><th>当...</th><th class="mid">最</th><th>附注</th></tr></thead>
        <tbody>
        <tr><td><div class="n"><svg class="g"><use href="#g-m"/></svg><svg class="st"><use href="#ok"/></svg><svg class="i16"><use href="#sheets"/></svg><span>图纸</span></div></td><td></td><td></td><td></td></tr>
        <tr><td><div class="n"><svg class="g"><use href="#g-v"/></svg><svg class="g"><use href="#g-m"/></svg><svg class="st"><use href="#ok"/></svg><svg class="i16"><use href="#sheet"/></svg><span>图纸页 "A3_1" (工作...</span></div></td><td></td><td class="mid"><svg class="st"><use href="#ok"/></svg></td><td></td></tr>
        <tr><td><div class="n"><svg class="g"><use href="#g-v"/></svg><svg class="g"><use href="#g-v"/></svg><svg class="g"><use href="#g-p"/></svg><svg class="st"><use href="#ok"/></svg><svg class="i16"><use href="#impv"/></svg><span>导入的 "Top@1"</span></div></td><td></td><td class="mid"><svg class="st"><use href="#ok"/></svg></td><td></td></tr>
        <tr><td><div class="n"><svg class="g"><use href="#g-v"/></svg><svg class="g"><use href="#g-v"/></svg><svg class="g"><use href="#g-l"/></svg><svg class="st"><use href="#ok"/></svg><svg class="i16"><use href="#sxl"/></svg><span>表区域 "SX@2" A</span></div></td><td></td><td class="mid"><svg class="st"><use href="#ok"/></svg></td><td></td></tr>
        <tr><td><div class="n"><svg class="g"><use href="#g-v"/></svg><svg class="g"><use href="#g-l"/></svg><svg class="st"><use href="#ques"/></svg><svg class="i16"><use href="#folder"/></svg><span>过时</span></div></td><td></td><td></td><td></td></tr>
        <tr><td><div class="n"><svg class="g"><use href="#g-p"/></svg><svg class="i16"><use href="#grp"/></svg><span>组</span></div></td><td></td><td></td><td></td></tr>
        <tr><td><div class="n"><svg class="g"><use href="#g-e"/></svg><svg class="st"><use href="#gball2"/></svg><svg class="i16"><use href="#hist"/></svg><span>模型历史记录</span></div></td><td></td><td class="mid"><svg class="st"><use href="#ok"/></svg></td><td></td></tr>
        <tr class="off"><td><div class="n in"><svg class="g"><use href="#g-t"/></svg><svg class="st"><use href="#eyeoff"/></svg><svg class="i16"><use href="#csys"/></svg><span>基准坐标系 (0)</span></div></td><td></td><td class="mid"><svg class="st"><use href="#ok"/></svg></td><td></td></tr>
        <tr><td><div class="n in"><svg class="g"><use href="#g-t"/></svg><svg class="st"><use href="#eye"/></svg><svg class="i16"><use href="#cube"/></svg><span>块 (1)</span></div></td><td></td><td class="mid"><svg class="st"><use href="#ok"/></svg></td><td></td></tr>
        <tr><td><div class="n in"><svg class="g"><use href="#g-t"/></svg><svg class="st"><use href="#eye"/></svg><svg class="i16"><use href="#blend"/></svg><span>边倒圆 (2)</span></div></td><td></td><td class="mid"><svg class="st"><use href="#ok"/></svg></td><td></td></tr>
        <tr class="off"><td><div class="n in"><svg class="g"><use href="#g-t"/></svg><svg class="st"><use href="#eyeoff"/></svg><svg class="i16"><use href="#plane"/></svg><span>基准平面 (3)</span></div></td><td></td><td class="mid"><svg class="st"><use href="#ok"/></svg></td><td></td></tr>
        <tr class="off"><td><div class="n in"><svg class="g"><use href="#g-t"/></svg><svg class="st"><use href="#eyeoff"/></svg><svg class="i16"><use href="#plane"/></svg><span>基准平面 (4)</span></div></td><td></td><td class="mid"><svg class="st"><use href="#ok"/></svg></td><td></td></tr>
        <tr><td><div class="n in"><svg class="g"><use href="#g-t"/></svg><svg class="st"><use href="#eye"/></svg><svg class="i16"><use href="#hole"/></svg><span>Ø25 孔 (5)</span></div></td><td></td><td class="mid"><svg class="st"><use href="#ok"/></svg></td><td></td></tr>
        <tr><td><div class="n in"><svg class="g"><use href="#g-t"/></svg><svg class="st"><use href="#eye"/></svg><svg class="i16"><use href="#hole"/></svg><span>Ø10 孔 (6)</span></div></td><td></td><td class="mid"><svg class="st"><use href="#ok"/></svg></td><td></td></tr>
        <tr class="cur"><td><div class="n in"><svg class="g"><use href="#g-l"/></svg><svg class="st"><use href="#eye"/></svg><svg class="i16"><use href="#mirror"/></svg><span>镜像特征 (7)</span></div></td><td><svg class="dep"><use href="#dep"/></svg></td><td class="mid"><svg class="st"><use href="#ok"/></svg></td><td></td></tr>
        <tr><td></td><td></td><td></td><td></td></tr><tr><td></td><td></td><td></td><td></td></tr><tr><td></td><td></td><td></td><td></td></tr>
        <tr><td></td><td></td><td></td><td></td></tr><tr><td></td><td></td><td></td><td></td></tr><tr><td></td><td></td><td></td><td></td></tr>
        <tr><td></td><td></td><td></td><td></td></tr><tr><td></td><td></td><td></td><td></td></tr><tr><td></td><td></td><td></td><td></td></tr>
        <tr><td></td><td></td><td></td><td></td></tr><tr><td></td><td></td><td></td><td></td></tr><tr><td></td><td></td><td></td><td></td></tr>
        <tr><td></td><td></td><td></td><td></td></tr><tr><td></td><td></td><td></td><td></td></tr><tr><td></td><td></td><td></td><td></td></tr>
        <tr><td></td><td></td><td></td><td></td></tr><tr><td></td><td></td><td></td><td></td></tr><tr><td></td><td></td><td></td><td></td></tr>
        </tbody>
      </table>
      </div>
      <div class="hs"><i></i></div>
    </div>
    <div class="split"></div>
    <button class="acc"><svg class="tri"><use href="#tri"/></svg>搜索</button>
    <button class="acc"><svg class="tri"><use href="#tri"/></svg>相关性</button>
    <button class="acc"><svg class="tri"><use href="#tri"/></svg>细节</button>
    <button class="acc"><svg class="tri"><use href="#tri"/></svg>预览</button>
  </aside>

  <section class="stage">
    <div class="tabs"><button class="tab"><svg width="14" height="15"><use href="#doc"/></svg><span>stepped_Section_View.prt</span><svg width="10" height="12"><use href="#pen"/></svg><svg class="tx" width="9" height="9"><use href="#x"/></svg></button></div>
    <div class="canvas">
      <svg class="drawing">
        <g transform="translate(-360 -205)" fill="none" stroke="#000">
          <rect x="585.500" y="276.500" width="888" height="627" stroke="#555" stroke-dasharray="8 7"/>
          <text x="831" y="440" class="dt">SECTION A-A</text>
          <rect x="728" y="467" width="42" height="42" fill="url(#hatch)" stroke="none"/>
          <rect x="812" y="467" width="82" height="42" fill="url(#hatch)" stroke="none"/>
          <rect x="1000" y="467" width="31" height="42" fill="url(#hatch)" stroke="none"/>
          <path d="M727.500 466.500H1031.500V509.500H727.500ZM769.500 466V509M812 466V509M894.500 466V509M1000 466V509" stroke-width="1.500"/>
          <path d="M791 454V481M791 485V491M791 494V521" stroke="#888" stroke-width="1.400"/>
          <path d="M947.500 454V482M947.500 485V491M947.500 494V521"/>
          <path d="M947.500 603.500H727.500V772.500H947.500A84.500 84.500 0 0 0 947.500 603.500" stroke-width="1.500"/>
          <circle cx="947.500" cy="688" r="52.500" stroke-width="1.500"/>
          <circle cx="791" cy="646" r="21" stroke-width="1.500"/>
          <circle cx="791" cy="730.500" r="21" stroke-width="1.500"/>
          <path d="M791 618V643M791 645V647M791 649V673M764 645.500H788M790 645.500H792M794 645.500H818M791 703V728M791 729V732M791 734V758M764 730.500H788M790 730.500H792M794 730.500H818M888 688H909M912 688H918M921 688H943M946 688H949M953 688H975M978 688H984M987 688H1006" stroke="#777"/>
          <path d="M947.500 629V651M947.500 653V660M947.500 662V684M947.500 686V690M947.500 693V716M947.500 718V724M947.500 726V747"/>
          <path d="M703.500 709V730.500H724M829 730.500H850.500V716M850.500 702V688H872M1023 688H1044.500V667" stroke-width="1.200"/>
          <text x="700" y="757" class="dt sm">A</text>
          <text x="1041" y="715" class="dt sm">A</text>
          <text x="371" y="1003" class="sn">"A3_1"</text>
        </g>
      </svg>

      <form class="dialog" onsubmit="return false">
        <div class="dh"><svg width="14" height="14"><use href="#wgear"/></svg><h2>剖视图</h2>
          <button type="button" aria-label="重置"><svg width="14" height="14"><use href="#reset"/></svg></button>
          <button type="button" class="q">?</button>
          <button type="button" aria-label="关闭对话框"><svg width="12" height="12"><use href="#x"/></svg></button>
        </div>
        <div class="db">
          <fieldset class="box cutline">
            <button type="button" class="bt"><svg class="caret"><use href="#caret"/></svg>剖切线</button>
            <div class="fr"><label for="def">定义</label>
              <span class="dsel"><span class="in"><svg class="i16"><use href="#exist"/></svg><select id="def"><option>选择现有的</option></select></span><svg class="caret"><use href="#caret"/></svg></span></div>
            <div class="fr pick"><span class="must"><svg width="14" height="14"><use href="#star"/></svg>选择独立截面线</span><button type="button" class="sq" aria-label="选择截面线"><svg width="20" height="20"><use href="#aim"/></svg></button></div>
          </fieldset>
          <fieldset class="box">
            <button type="button" class="bt"><svg class="caret"><use href="#caret"/></svg>视图原点</button>
            <div class="fr off"><span class="must"><svg width="14" height="14"><use href="#star"/></svg>指定位置</span><button type="button" class="sq" aria-label="指定位置"><svg width="24" height="20"><use href="#move"/></svg></button></div>
            <fieldset class="box sub">
              <button type="button" class="bt"><svg class="caret"><use href="#caret"/></svg>放置</button>
              <div class="fr off"><label for="how">方法</label><span class="dsel dis"><span class="in"><svg width="17" height="16"><use href="#hinge"/></svg><select id="how" disabled><option>铰链副</option></select></span><svg class="caret"><use href="#caret"/></svg></span></div>
              <button type="button" class="bt nest"><svg class="tri"><use href="#tri"/></svg>跟踪</button>
              <label class="ck"><input type="checkbox" checked disabled>关联对齐</label>
            </fieldset>
            <fieldset class="box sub">
              <button type="button" class="bt"><svg class="caret"><use href="#caret"/></svg>移动视图</button>
              <div class="fr act"><span>指定屏幕位置</span><button type="button" class="sq" aria-label="指定屏幕位置"><svg width="24" height="20"><use href="#move"/></svg></button></div>
            </fieldset>
          </fieldset>
          <fieldset class="box shut"><button type="button" class="bt"><svg class="tri"><use href="#tri"/></svg>预览</button></fieldset>
          <div class="fold"><svg width="9" height="5"><path d="M0 5L4.500 0L9 5Z"/></svg></div>
          <div class="df"><button type="button" class="close">关闭</button></div>
        </div>
      </form>
    </div>
  </section>
</main>

<footer class="status">
  <b>选择用于剖视图的独立剖切线</b>
  <button class="notes"><svg width="15" height="16"><use href="#bell"/></svg>2 通知</button>
</footer>
<div class="ime">
  <svg width="32" height="31"><use href="#sogou"/></svg>
  <div class="keys"><b>中</b><b class="pu">•,</b><svg class="i16"><use href="#pmic"/></svg><svg class="i16"><use href="#kbd"/></svg><svg class="i18"><use href="#tee"/></svg><svg class="i16"><use href="#game"/></svg><svg width="14" height="14"><use href="#apps"/></svg></div>
</div>
<div class="mark">CSDN @山涧果子</div>
</body>
</html>
```
FILE: styles.css
```css
* { box-sizing: border-box; }
:root { --blue: #005f87; --ink: #222; --line: #aaa; }
html, body { height: 100%; margin: 0; }
html { overflow: hidden; }
body {
  display: flex; flex-direction: column; min-width: 1280px; overflow: hidden; position: relative;
  font: 12px/16px "Noto Sans", "Noto Sans CJK SC", sans-serif; color: var(--ink); background: #fff;
}
button, select, input { font: inherit; color: inherit; }
button { border: 0; background: none; padding: 0; white-space: nowrap; }
svg { display: block; flex: none; }
h1, h2 { margin: 0; font: inherit; }
.defs { position: absolute; width: 0; height: 0; }
.i16 { width: 16px; height: 16px; }
.i18 { width: 18px; height: 18px; }
.i24 { width: 24px; height: 24px; }
.i32 { width: 32px; height: 32px; overflow: visible; }
.caret { width: 8px; height: 5px; padding-right: 1px; }
.tri { width: 5px; height: 9px; color: var(--blue); }

/* title bar and menu */
.top { background: linear-gradient(90deg, #006389, #0479a6); color: #fff; }
.titlebar { display: flex; align-items: center; gap: 6px; height: 26px; padding: 0 4px; }
.nx { width: 32px; font: 800 20px/20px "Open Sans", sans-serif; }
.sep { width: 1px; height: 18px; background: #004a66; }
.ib { display: flex; align-items: center; width: 16px; height: 22px; }
.ib.dim { width: 17px; color: #2f7f9d; }
.ib.cw { width: 8px; }
.ib.gap-l { margin-left: 6px; }
.nx + .sep + .ib { margin-left: 3px; }
.ib.winbtn { width: auto; gap: 6px; }
.winbtn .i16 { margin-right: -2px; }
.over { border-top: 1px solid #fff; height: 8px; padding-top: 2px; }
.titlebar h1 { flex: 1; text-align: center; }
.siemens { width: 76px; font: 800 13px/16px "Open Sans", sans-serif; padding-top: 2px; }
.wb { width: 17px; display: flex; justify-content: center; }
.menubar { display: flex; height: 30px; padding-left: 8px; font-size: 13px; line-height: 18px; }
.m { padding: 2px 12px 0; height: 28px; border-bottom: 2px solid transparent; }
.m.file { margin-right: 13px; }
.m.on { color: #ffc84a; border-color: #ffc84a; }
.tools { display: flex; align-items: center; gap: 10px; margin-left: auto; padding-right: 7px; font-size: 11px; }
.search { display: flex; align-items: center; width: 178px; height: 22px; border: 1px solid #7d6f6a; background: #fff; padding-right: 1px; }
.search input { flex: 1; min-width: 0; border: 0; padding: 0; background: none; outline: 0; font-size: 12px; }
.search input::placeholder { color: #aaa; }
.ib.tut { width: 49px; gap: 4px; }

/* ribbon */
.ribbon { display: flex; position: relative; height: 94px; padding: 5px 0 4px; border-bottom: 1px solid #ddd; font-size: 11px; line-height: 14px; }
.rg { display: flex; flex-direction: column; border-right: 1px solid #d8d8d8; }
.rb { display: flex; flex: 1; }
.rf { display: flex; align-items: center; height: 14px; margin-bottom: -2px; padding-right: 6px; color: var(--blue); }
.rf span { flex: 1; text-align: center; padding-right: 3px; }
.rf .caret { color: #111; }
.g1 { width: 79px; padding-left: 12px; }
.g1 .rf { margin-left: -12px; }
.g2 { width: 219px; }
.g2 .rb, .g5 .rb, .g6 .rb { padding-left: 12px; }
.g3 .rb, .g4 .rb { padding-left: 8px; }
.g3 { width: 203px; }
.g4 { width: 268px; }
.g5 { width: 131px; }
.g6 { width: 67px; }
.g5 .rb { gap: 8px; }
.big { display: flex; flex-direction: column; align-items: center; width: 44px; height: 68px; }
.big .i32 { margin-bottom: 5px; }
.big .caret { margin-top: 5px; }
.w56 { width: 56px; }
.w40 { width: 40px; }
.sg { display: grid; grid-auto-rows: 30px; gap: 6px 0; margin: 0 5px; height: 66px; }
.sg button { display: grid; place-items: center; }
.c3 { grid-template-columns: repeat(3, 33px); }
.c2 { grid-template-columns: repeat(2, 33px); margin: 0 3px; }
.c6 { grid-template-columns: repeat(6, 33px); margin: 0; }
.cm { height: 30px; padding-left: 3px; }
.bigA { font: 700 44px/44px "Liberation Serif", serif; fill: #ec7a08; }
.bigA.thin { font-weight: 400; font-size: 42px; }
.end { margin-left: auto; margin-right: 5px; }
.ribbon .end { align-self: flex-end; margin-bottom: 4px; }

/* selection bar */
.selbar { display: flex; align-items: center; height: 28px; border-bottom: 1px solid var(--line); padding-left: 13px; }
.menu { display: flex; align-items: center; font-size: 11px; width: 76px; }
.menu svg:first-child { margin-right: 6px; }
.menu .caret { margin-left: auto; margin-right: 6px; }
.vs { width: 1px; height: 20px; background: #d8d8d8; }
.sel { display: flex; align-items: center; position: relative; height: 22px; border: 1px solid #777; margin: 0 9px 0 12px; }
.sel select { appearance: none; border: 0; background: none; width: 100%; height: 20px; padding: 0 2px; font-size: 11px; }
.sel .caret { position: absolute; right: 4px; }
.s148 { width: 149px; margin-right: 4px; }
.s156 { width: 156px; margin: 0 5px 0 6px; }
.tb { display: grid; place-items: center; width: 23px; height: 22px; margin-right: 2px; }
.tb.hl { background: #cbe5ea; }
.selbar .tb + .caret { margin: 0 10px 0 2px; }

/* work area */
.work { flex: 1; display: flex; min-height: 0; }
.rail { width: 37px; background: #dcdcdc; border-right: 1px solid var(--line); display: flex; flex-direction: column; padding-left: 3px; }
.rail button { display: grid; place-items: center; height: 44px; }
.rail .first { height: 32px; padding: 0 3px 2px 0; }
.rail .on { background: #fff; border: 1px solid var(--line); border-right: 0; margin-right: -1px; }
.panel { width: 323px; display: flex; flex-direction: column; padding: 0 9px 5px 8px; border-right: 1px solid var(--line); }
.panel header { display: flex; align-items: center; gap: 4px; height: 27px; padding: 0 2px 2px 0; margin-left: -2px; }
.panel h2 { flex: 1; font-weight: 500; color: #111; }
.max { width: 12px; height: 11px; border: 1px solid #000; border-top-width: 2px; }
.tree { flex: 1; min-height: 0; display: flex; flex-direction: column; border: 1px solid #d8d8d8; }
.rows { flex: 1; min-height: 0; overflow: hidden; }
.tree table { width: 100%; border-collapse: separate; border-spacing: 0; table-layout: fixed; }
.k1 { width: 196px; } .k2 { width: 39px; } .k3 { width: 24px; }
th { height: 21px; padding: 1px 0 0 6px; text-align: left; font-weight: 400; background: #efefef; border-bottom: 1px solid #d8d8d8; border-right: 1px solid #d8d8d8; }
td { height: 20px; padding: 0; border-bottom: 1px solid #e8e8e8; border-right: 1px solid #e8e8e8; }
th:last-child, td:last-child { border-right: 0; }
tbody tr:nth-child(even) { background: #fafafa; }
.mid { text-align: center; padding-left: 0; }
.mid svg { margin: auto; }
.sort { display: inline-block; margin-left: 18px; vertical-align: 2px; }
.n { display: flex; align-items: center; height: 19px; white-space: nowrap; overflow: hidden; }
.n.in { padding-left: 19px; }
.g { width: 19px; height: 20px; }
.st { width: 16px; height: 14px; }
.n .st { height: 16px; }
.n span { padding-left: 3px; }
.off { color: #aaa; }
.cur { font-weight: 700; }
.dep { width: 8px; height: 15px; margin-left: 8px; }
.hs { height: 17px; background: #efefef; padding: 7px 60px 0 17px; }
.hs i { display: block; height: 2px; background: #888; }
.split { height: 6px; border: 1px solid var(--line); background: #dcdcdc; margin: 2px 0; }
.acc { display: flex; align-items: center; gap: 9px; height: 24px; padding-left: 10px; border-bottom: 2px solid #d0d0d0; font-size: 14px; line-height: 20px; color: var(--blue); }

/* document tabs and sheet */
.stage { flex: 1; min-width: 0; display: flex; flex-direction: column; }
.tabs { height: 27px; border-bottom: 2px solid var(--blue); }
.tab { display: flex; align-items: center; height: 25px; width: 211px; padding: 0 6px; background: var(--blue); color: #e4eef2; }
.tab span { flex: 1; text-align: left; padding-left: 6px; }
.tx { color: #b9c9d1; margin-left: 7px; }
.canvas { flex: 1; min-height: 0; position: relative; background: #cbcbcb; }
.drawing { width: 100%; height: 100%; }
.dt { font: 15px "Liberation Mono", monospace; fill: #333; stroke: none; }
.dt.sm { font-size: 12px; }
.sn { font: 13px "Liberation Sans", sans-serif; fill: #111; stroke: none; }

/* dialog */
.dialog { position: absolute; left: 0; top: 0; width: 322px; background: #efefef; border: solid #e6e6e6; border-width: 0 1px 1px; }
.dh { display: flex; align-items: center; height: 24px; margin: 0 -1px; padding: 0 9px 0 7px; background: var(--blue); color: #fff; }
.dh h2 { flex: 1; font-size: 13px; padding-left: 8px; }
.dh button { width: 22px; display: grid; place-items: center; }
.dh button:last-child { margin-left: 6px; width: 14px; }
.dh .q { width: 18px; font: 800 15px/20px "Open Sans", sans-serif; }
.db { padding: 5px 5px 10px; }
.box { margin: 0 0 2px; padding: 0 8px 8px; border: 1px solid #ccc; background: #fff; min-width: 0; }
.cutline { padding-bottom: 7px; margin-bottom: 3px; }
.box.shut { padding-bottom: 0; margin: 0; }
.box.sub { margin: 4px 0 0; }
.bt { display: flex; align-items: center; height: 24px; gap: 7px; color: var(--blue); font-weight: 700; font-size: 13px; }
.shut .bt { height: 23px; }
.bt .tri { margin: 0 2px 0 1px; }
.bt.nest { margin: 2px 0 0 10px; }
.fr { display: flex; align-items: center; justify-content: space-between; height: 32px; margin-top: 6px; }
.fr:has(.dsel) { height: 26px; }
.fr.pick { margin-top: 2px; gap: 2px; }
.must { display: flex; align-items: center; gap: 5px; flex: 1; height: 32px; padding-left: 1px; }
.must svg { color: #f5222d; }
.pick .must { background: #ffdf78; }
.sq { display: grid; place-items: center; width: 32px; height: 32px; border: 1px solid #777; --box: #222; --dot: #c00; --arrow: #d8440f; }
.pick .sq { background: #ffdf78; border-color: #fcb81c; }
.off .sq { border-color: #bbb; --box: #aaa; --dot: #aaa; --arrow: #aaa; }
.off .must svg { color: #d3a0a8; }
.dsel { display: flex; align-items: center; gap: 6px; width: 138px; height: 26px; padding: 2px 5px 2px 2px; border: 1px solid #777; }
.dsel .in { display: flex; align-items: center; gap: 4px; flex: 1; height: 20px; padding-left: 2px; background: #dcecf0; border: 1px dotted #111; }
.dsel select { appearance: none; border: 0; background: none; padding: 0; flex: 1; min-width: 0; opacity: 1; }
.dis { background: #f3f3f3; border-color: #bbb; color: #999; }
.dis .in { background: none; border-color: transparent; gap: 2px; }
.ck { display: flex; align-items: center; gap: 4px; height: 24px; color: #aaa; }
.ck input { appearance: none; width: 13px; height: 13px; margin: 0 0 0 1px; border-radius: 2px; background: #bdbdbd; display: grid; place-items: center; }
.ck input::before { content: ""; width: 7px; height: 3px; border: solid #fff; border-width: 0 0 1px 1px; transform: rotate(-45deg); }
.fold { display: flex; justify-content: center; height: 14px; align-items: center; border-bottom: 1px solid #ccc; }
.df { display: flex; justify-content: flex-end; padding: 9px 10px 0; }
.close { width: 54px; height: 25px; background: var(--blue); color: #fff; }

/* status bar and floating items */
.status { display: flex; justify-content: space-between; height: 24px; padding: 0 54px 4px 3px; border-top: 1px solid var(--line); box-shadow: inset 0 -2px #c3d0da; font-size: 11px; align-items: center; }
.notes { display: flex; align-items: center; gap: 4px; }
.ime { position: absolute; left: 1155px; bottom: 2px; display: flex; align-items: flex-end; color: #1273de; }
.keys { display: grid; grid-template-columns: repeat(7, 24px); place-items: center; height: 25px; margin-left: -4px; padding: 0 2px 0 4px; background: #fff; border: 1px solid #b9cde6; border-left: 0; }
.ime > svg { z-index: 1; }
.keys b { font-size: 15px; line-height: 20px; }
.mark { position: absolute; right: 4px; bottom: 10px; font: 300 38px/48px "Noto Sans CJK SC", sans-serif; color: rgba(225, 225, 225, .75); text-shadow: 1px 1px 1px rgba(90, 90, 90, .7); }
```
